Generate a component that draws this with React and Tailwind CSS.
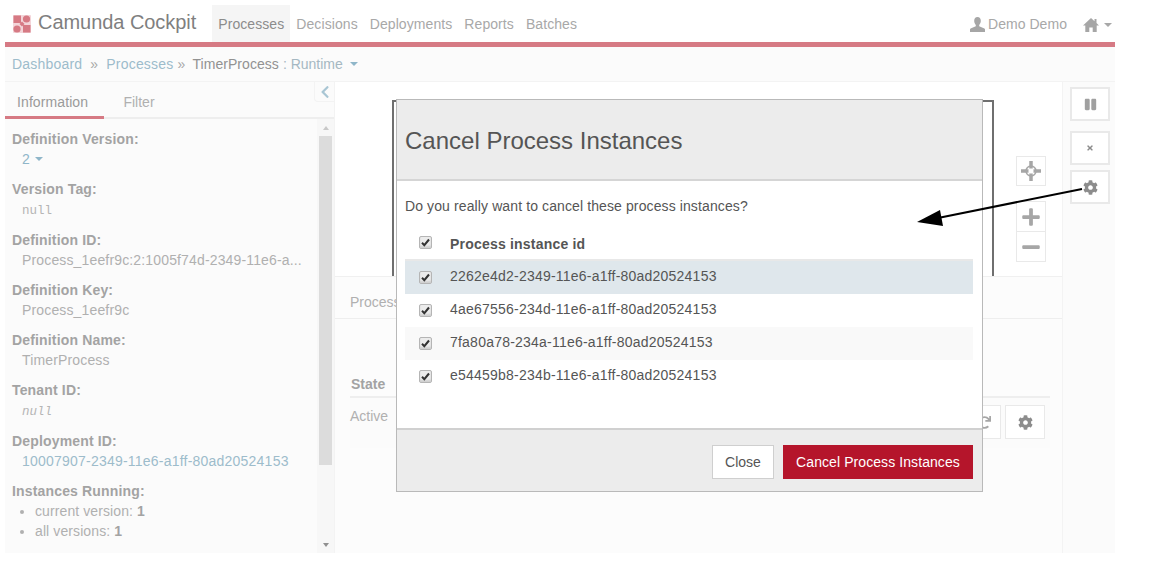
// App.jsx
import { FaCog, FaPause, FaPlus, FaMinus, FaTimes, FaChevronLeft, FaRedo } from 'react-icons/fa';

const fields = [
  { label: 'Definition Version:', value: '2', kind: 'version' },
  { label: 'Version Tag:', value: 'null', kind: 'null' },
  { label: 'Definition ID:', value: 'Process_1eefr9c:2:1005f74d-2349-11e6-a...' },
  { label: 'Definition Key:', value: 'Process_1eefr9c' },
  { label: 'Definition Name:', value: 'TimerProcess' },
  { label: 'Tenant ID:', value: 'null', kind: 'nullItalic' },
  { label: 'Deployment ID:', value: '10007907-2349-11e6-a1ff-80ad20524153', kind: 'link' },
];

const instanceIds = [
  '2262e4d2-2349-11e6-a1ff-80ad20524153',
  '4ae67556-234d-11e6-a1ff-80ad20524153',
  '7fa80a78-234a-11e6-a1ff-80ad20524153',
  'e54459b8-234b-11e6-a1ff-80ad20524153',
];

const navItems = ['Decisions', 'Deployments', 'Reports', 'Batches'];

const Caret = ({ className = '' }) => (
  <span className={`inline-block h-0 w-0 border-x-4 border-t-4 border-x-transparent ${className}`} />
);

const Logo = () => (
  <svg width="18" height="18" viewBox="0 0 18 18" className="shrink-0">
    <rect width="18" height="18" rx="1" fill="#f3d5d9" />
    <rect x="0.5" y="0.5" width="7.5" height="7.5" fill="#d67a84" />
    <circle cx="13.5" cy="4" r="3.6" fill="#d67a84" />
    <circle cx="4" cy="14" r="3.6" fill="#d67a84" />
    <rect x="10" y="10" width="7.5" height="7.5" fill="#d67a84" />
    <path d="M9 6.5 11.5 9 9 11.5 6.5 9Z" fill="#d67a84" />
  </svg>
);

const UserIcon = () => (
  <svg width="15" height="15" viewBox="0 0 15 15" fill="#a6a6a6">
    <path d="M7.5 0C5.4 0 4.2 1.6 4.2 3.8c0 1.6.6 3.2 1.6 4.2v1.2L.6 11.6c-.4.2-.6.5-.6 1V15h15v-2.4c0-.5-.2-.8-.6-1L9.2 9.2V8c1-1 1.6-2.6 1.6-4.2C10.800 1.600 9.600 0 7.500 0Z" />
  </svg>
);

const HomeIcon = () => (
  <svg width="16" height="14" viewBox="0 0 16 14" fill="#a6a6a6">
    <path d="M8 0 0 7.500h2.300V14h4v-4.500h3.400V14h4V7.500H16l-2.500-2.400V1h-2v2.200Z" />
  </svg>
);

const CrosshairIcon = () => (
  <svg width="20" height="20" viewBox="0 0 20 20" fill="none" stroke="#a6a6a6">
    <circle cx="10" cy="10" r="5" strokeWidth="1.500" />
    <path d="M10 0v7.500M10 12.500V20M0 10h7.500M12.500 10H20" strokeWidth="3.500" />
  </svg>
);

const SquareButton = ({ className = '', children }) => (
  <div className={`flex items-center justify-center border-2 border-[#e9e9e9] bg-white ${className}`}>
    {children}
  </div>
);

const FieldValue = ({ value, kind }) => {
  if (kind === 'version') {
    return (
      <div className="flex items-center gap-[5px] pl-2.5 text-[#8fb6c9]">
        {value} <Caret className="border-t-[#8fb6c9]" />
      </div>
    );
  }
  if (kind === 'null') {
    return <div className="h-5 pl-2.5 font-['Liberation_Mono'] text-[12.500px] leading-6 text-[#b5b5b5]">{value}</div>;
  }
  if (kind === 'nullItalic') {
    return <div className="h-5 pl-2.5 font-['Liberation_Mono'] text-[12.500px] italic leading-6 text-[#b5b5b5]">{value}</div>;
  }
  if (kind === 'link') {
    return <div className="pl-2.5 tracking-[0.22px] text-[#9dbccb]">{value}</div>;
  }
  return <div className="pl-2.5 tracking-[0.15px] text-[#b0b0b0]">{value}</div>;
};

const Checkbox = () => (
  <span className="flex h-[13px] w-[13px] items-center justify-center rounded-[2px] border border-[#b5b5b5] bg-[#ececec] shadow-[inset_0_-2px_2px_#d0d0d0]">
    <svg width="9" height="9" viewBox="0 0 9 9" fill="none" stroke="#333" strokeWidth="2">
      <path d="M1 4.800 3.300 7.200 8 1.500" />
    </svg>
  </span>
);

const CancelModal = () => (
  <div className="absolute left-[396px] top-[99px] flex h-[393px] w-[587px] flex-col border border-[#b9b9b9] bg-white text-[14px] text-[#555]">
    <div className="flex h-[81px] shrink-0 items-center border-b-2 border-[#d5d5d5] bg-[#ececec] pl-2 pt-[2px]">
      <h3 className="text-[24px] text-[#555]">Cancel Process Instances</h3>
    </div>
    <div className="flex-1 pl-2 pr-[9px] pt-[15px]">
      <p className="h-[20px] leading-5 tracking-[0.11px]">Do you really want to cancel these process instances?</p>
      <div className="mt-[12px] flex h-[33px] items-center border-b-2 border-[#e8e8e8] pt-[1px]">
        <div className="w-[45px] pb-[3px] pl-[14px]">
          <Checkbox />
        </div>
        <span className="font-bold tracking-[0.2px]">Process instance id</span>
      </div>
      {instanceIds.map((id, i) => (
        <div
          key={id}
          className={`flex h-[33px] items-center pb-[2px] ${i === 0 ? 'bg-[#dfe7ec]' : i === 2 ? 'bg-[#f9f9f9]' : ''}`}
        >
          <div className="w-[45px] pl-[14px] pt-[2px]">
            <Checkbox />
          </div>
          <span className="tracking-[0.22px]">{id}</span>
        </div>
      ))}
    </div>
    <div className="flex h-[63px] shrink-0 items-start justify-end gap-[9px] border-t-2 border-[#d0d0d0] bg-[#ececec] pr-[9px] pt-[15px]">
      <button type="button" className="h-[34px] w-[62px] border border-[#cfcfcf] bg-white text-[#555]">
        Close
      </button>
      <button type="button" className="h-[34px] w-[190px] bg-[#b5152b] tracking-[0.08px] text-white">
        Cancel Process Instances
      </button>
    </div>
  </div>
);

const App = () => (
  <div className="relative h-[567px] w-[1157px] overflow-hidden bg-white pl-[5px] pt-[5px] font-['Liberation_Sans',sans-serif] text-[14px]">
    <div className="flex h-[548px] w-[1110px] flex-col">
      <header className="flex h-[37px] shrink-0 items-stretch pl-2 pr-[3px]">
        <div className="flex items-center gap-[7px]">
          <Logo />
          <span className="-mt-[3px] text-[20px] tracking-[-0.05px] text-[#7f7f7f]">Camunda Cockpit</span>
        </div>
        <nav className="ml-[16px] flex items-stretch pb-0 tracking-[0.08px] text-[#a8a8a8]">
          <span className="flex items-center bg-[#f5f5f5] px-[6px] pt-[2px] text-[#8c8c8c]">Processes</span>
          {navItems.map((item) => (
            <span key={item} className="flex items-center px-[6px] pt-[2px]">
              {item}
            </span>
          ))}
        </nav>
        <div className="ml-auto flex items-center pt-[2px] tracking-[0.05px] text-[#a8a8a8]">
          <span className="flex items-center gap-[3px]">
            <UserIcon /> Demo Demo
          </span>
          <span className="ml-4 flex items-center gap-[5px]">
            <HomeIcon /> <Caret className="border-t-[#a8a8a8]" />
          </span>
        </div>
      </header>
      <div className="h-[5px] shrink-0 bg-[#d67a84]" />

      <div className="flex h-[35px] shrink-0 items-center border-b border-[#f3f3f3] bg-[#fbfbfb] pl-[7px] tracking-[0.2px] text-[#9dbccb]">
        <span>Dashboard</span>
        <span className="mx-2 text-[#a8a8a8]">»</span>
        <span>Processes</span>
        <span className="ml-1 text-[#a8a8a8]">»</span>
        <span className="ml-[7px] tracking-[0.05px] text-[#929292]">TimerProcess</span>
        <span className="ml-1 tracking-[0px] text-[#a5b8c2]">: Runtime</span>
        <Caret className="ml-[7px] border-t-[#8fb6c9]" />
      </div>

      <div className="flex min-h-0 flex-1">
        <aside className="relative flex w-[330px] shrink-0 flex-col border-r border-[#f3f3f3] bg-[#fbfbfb]">
          <div className="flex h-[37px] shrink-0 border-b-2 border-[#eeeeee]">
            <div className="-mb-[2px] flex w-[99px] items-center border-b-[3px] border-[#d67a84] pl-[12px] pt-[7px] tracking-[0.1px] text-[#9a9a9a]">
              Information
            </div>
            <div className="flex w-[70px] items-center justify-center pt-[5px] text-[#b0b0b0]">Filter</div>
          </div>
          <div className="flex min-h-0 flex-1">
            <div className="min-w-0 flex-1 pl-[7px] pt-[10px]">
              {fields.map((field) => (
                <div key={field.label} className="mb-[10.300px] leading-5">
                  <div className="font-bold tracking-[0.16px] text-[#a3a3a3]">{field.label}</div>
                  <FieldValue value={field.value} kind={field.kind} />
                </div>
              ))}
              <div className="leading-5">
                <div className="font-bold tracking-[0.16px] text-[#a3a3a3]">Instances Running:</div>
                <ul className="list-disc pl-[23px] tracking-[0.1px] text-[#b0b0b0]">
                  <li>
                    current version: <b className="text-[#a3a3a3]">1</b>
                  </li>
                  <li>
                    all versions: <b className="text-[#a3a3a3]">1</b>
                  </li>
                </ul>
              </div>
            </div>
            <div className="flex w-[17px] shrink-0 flex-col items-center bg-[#f7f7f7]">
              <div className="flex h-[17px] items-center">
                <span className="h-0 w-0 border-x-[3.500px] border-b-[4px] border-x-transparent border-b-[#c8c8c8]" />
              </div>
              <div className="h-[329px] w-[13px] bg-[#dcdcdc]" />
              <div className="mt-auto flex h-[17px] items-center">
                <span className="h-0 w-0 border-x-[3.500px] border-t-[4px] border-x-transparent border-t-[#909090]" />
              </div>
            </div>
          </div>
          <div className="absolute right-0 top-0 flex h-[20px] w-[20px] items-center justify-center rounded-bl border-b border-l border-[#f3f3f3] text-[#a9c6d4]">
            <FaChevronLeft size={14} />
          </div>
        </aside>

        <main className="flex min-w-0 flex-1 flex-col">
          <div className="relative h-[195px] shrink-0 border-b border-[#f0f0f0] bg-white">
            <div className="absolute left-[57px] right-[68px] top-[18px] h-[176px] border-x-2 border-t-2 border-[#6f6f6f]" />
            <div className="absolute left-[681px] top-[74px] flex flex-col">
              <SquareButton className="h-[30px] w-[30px] border-[1px]">
                <CrosshairIcon />
              </SquareButton>
              <div className="mt-[15px] flex flex-col">
                <SquareButton className="h-[31px] w-[30px] border-[1px] text-[#a6a6a6]">
                  <FaPlus size={20} />
                </SquareButton>
                <SquareButton className="-mt-px h-[31px] w-[30px] border-[1px] text-[#a6a6a6]">
                  <FaMinus size={20} />
                </SquareButton>
              </div>
            </div>
          </div>
          <div className="flex min-h-0 flex-1 flex-col bg-[#fcfcfc]">
            <div className="flex h-[42px] shrink-0 items-center border-b border-[#eeeeee] pl-[15px] pt-[10px] text-[#b0b0b0]">
              Process Instances
            </div>
            <div className="ml-[15px] mr-[12px] mt-[54px]">
              <div className="flex h-[25px] items-center border-b-2 border-[#eeeeee] font-bold text-[#a3a3a3]">
                <span className="pl-[1px]">State</span>
              </div>
              <div className="relative h-[50px] bg-[#fbfbfb] pt-[8px] text-[#b0b0b0]">
                Active
                <div className="absolute right-[5px] top-[7px] flex gap-1">
                  <SquareButton className="h-[34px] w-[34px] border-[1.500px] text-[#a6a6a6]">
                    <FaRedo size={13} />
                  </SquareButton>
                  <SquareButton className="h-[34px] w-[40px] border-[1.500px] text-[#8c8c8c]">
                    <FaCog size={15} />
                  </SquareButton>
                </div>
              </div>
            </div>
          </div>
        </main>

        <aside className="flex w-[53px] shrink-0 flex-col items-start border-l border-[#f3f3f3] bg-[#fbfbfb] pl-[7px] pt-[5px]">
          <SquareButton className="h-[34px] w-[40px] text-[#a0a0a0]">
            <FaPause size={13} />
          </SquareButton>
          <SquareButton className="mt-[10px] h-[34px] w-[40px] text-[#8c8c8c]">
            <FaTimes size={8} />
          </SquareButton>
          <SquareButton className="mt-[5px] h-[34px] w-[40px] text-[#8c8c8c]">
            <FaCog size={15} />
          </SquareButton>
        </aside>
      </div>
    </div>

    <CancelModal />

    <svg className="absolute left-0 top-0" width="1157" height="567" fill="none">
      <path d="M1082 189 938 218" stroke="#000" strokeWidth="2" />
      <path d="M917 222 940 210 943 226Z" fill="#000" />
    </svg>
  </div>
);

export default App;
